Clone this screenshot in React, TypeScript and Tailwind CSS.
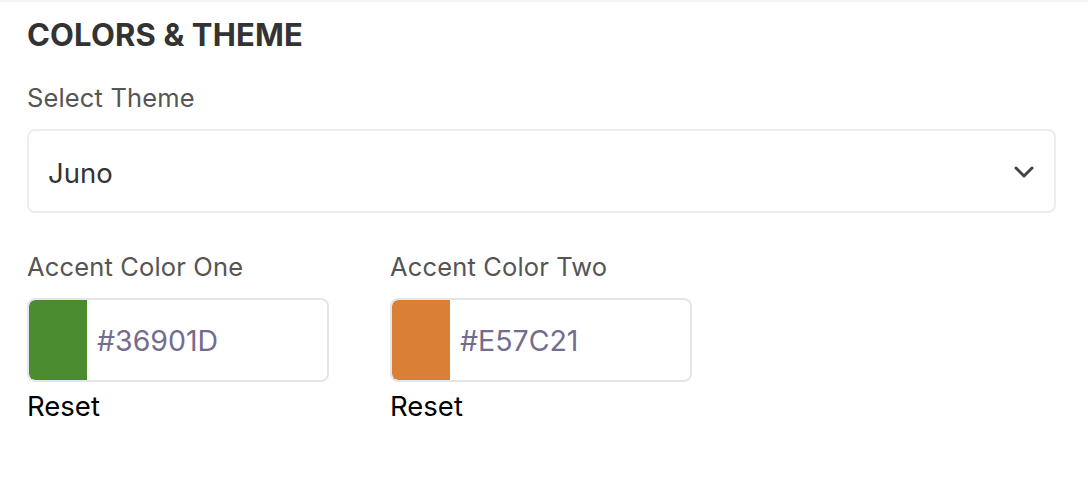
import React from 'react';

// Accent colour field: swatch on the left, hex value on the right
function ColorField({ label, color, swatch }: { label: string; color: string; swatch: string }) {
  return (
    <div className="flex flex-col w-[302px]">
      <label className="text-[25.5px] leading-[30px] tracking-[0.15px] text-[#555555]">{label}</label>
      <div className="mt-[16px] flex h-[84px] rounded-[8px] border-2 border-[#e4e6ec] bg-white overflow-hidden">
        <div className={`w-[58px] h-full rounded-l-[6px] ${swatch}`} />
        <div className="flex items-center pl-[10px] pt-[2px] text-[28.5px] text-[#736d8d]">{color}</div>
      </div>
      <button className="mt-[9px] self-start text-[27.5px] leading-[30px] text-black">Reset</button>
    </div>
  );
}

export default function App() {
  return (
    <div
      className="w-[1088px] h-[494px] bg-white border-t-2 border-[#f4f4f4] pl-[27px] pr-[32px] pt-[16px]"
      style={{ fontFamily: 'Inter, "Noto Sans", sans-serif' }}
    >
      <h2 className="text-[31px] leading-[34px] font-bold tracking-[0.15px] text-[#333333]">COLORS &amp; THEME</h2>

      <div className="mt-[31px]">
        <label className="block text-[25.5px] leading-[30px] tracking-[0.15px] text-[#555555]">Select Theme</label>
        <div className="mt-[16px] flex h-[84px] items-center justify-between rounded-[8px] border-2 border-[#ededed] bg-white pl-[19px] pr-[19px]">
          <span className="pt-[5px] text-[27.5px] text-[#333333]">Juno</span>
          <svg width="22" height="14" viewBox="0 0 22 14" fill="none" className="mt-[2px]">
            <path d="M3 3l8 8 8-8" stroke="#444444" strokeWidth="3" strokeLinecap="round" strokeLinejoin="round" />
          </svg>
        </div>
      </div>

      <div className="mt-[39px] flex gap-[61px]">
        <ColorField label="Accent Color One" color="#36901D" swatch="bg-[#4b8c30]" />
        <ColorField label="Accent Color Two" color="#E57C21" swatch="bg-[#d98036]" />
      </div>
    </div>
  );
}
